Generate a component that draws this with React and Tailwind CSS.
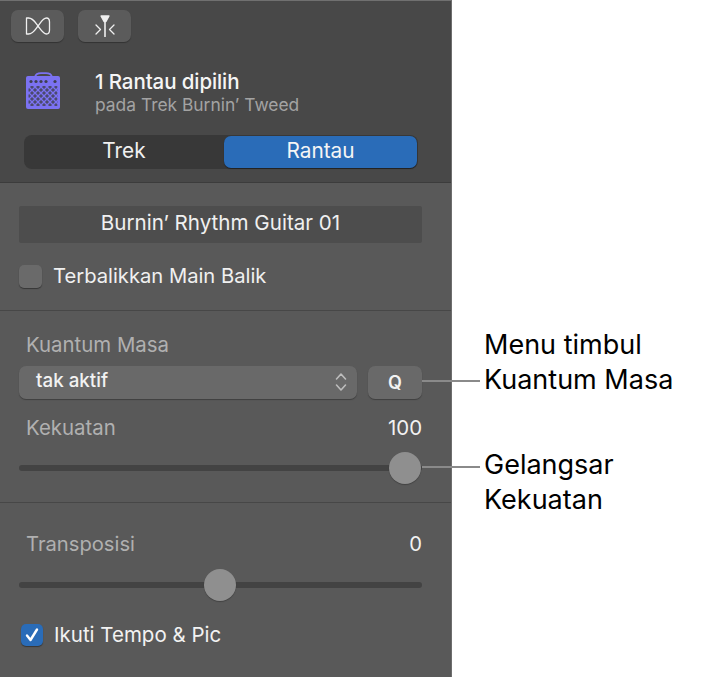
import React from "react";

const font = { fontFamily: "Inter, 'Noto Sans', sans-serif" };

function Slider({ pos }) {
  return (
    <div className="relative h-[36px] flex items-center">
      <div className="h-[6px] w-full rounded-full bg-[#434343]" />
      <div className="absolute top-[2px] w-[32px] h-[32px] rounded-full bg-[#8f8f8f] shadow-[0_1px_1px_rgba(0,0,0,0.25)]" style={{ left: pos }} />
    </div>
  );
}

export default function App() {
  return (
    <div className="relative w-[705px] h-[678px] bg-white flex font-['Inter'] overflow-hidden" style={font}>
      <div className="w-[452px] h-[677px] flex flex-col bg-[#595959] border-r border-[#6e6e6e] text-[#f2f2f2]">
        <div className="h-[183px] shrink-0 bg-[#484848] border-t border-[#707070] border-b-[1px] border-b-[#3c3c3c] pt-[9px] flex flex-col">
          <div className="flex gap-[14px] pl-[11px]">
            <button className="w-[53px] h-[32px] rounded-[7px] bg-[#5b5b5b] shadow-[0_1px_1px_rgba(0,0,0,0.3)] flex items-center justify-center">
              <svg width="26" height="20" viewBox="0 0 26 20" fill="none" stroke="#f0f0f0" strokeWidth="1.3" strokeLinecap="round" strokeLinejoin="round">
                <path d="M1.5 2 V18 H3.5 C8 18 10 14 13 10 C16 6 18 2 21.5 2 C24 2 24.5 4 24.5 6 V14 C24.5 16 24 18 21.5 18 C18 18 16 14 13 10 C10 6 8 2 3.5 2 Z" />
              </svg>
            </button>
            <button className="w-[53px] h-[32px] rounded-[7px] bg-[#5b5b5b] shadow-[0_1px_1px_rgba(0,0,0,0.3)] flex items-center justify-center">
              <svg width="22" height="22" viewBox="0 0 22 22" fill="none" stroke="#f0f0f0" strokeWidth="1.3" strokeLinecap="round" strokeLinejoin="round">
                <path d="M7 1 H15 L12 6.5 H10 Z" fill="#f0f0f0" />
                <path d="M11 6 V21.5" strokeWidth="1.6" />
                <path d="M2 10 L6.5 14.5 L2 19" />
                <path d="M20 10 L15.5 14.5 L20 19" />
              </svg>
            </button>
          </div>
          <div className="flex items-start mt-[28px] pl-[26px]">
            <svg width="35" height="37" viewBox="0 0 35 37" className="mt-[2px]">
              <defs>
                <pattern id="mesh" width="6" height="6" patternUnits="userSpaceOnUse">
                  <rect width="6" height="6" fill="#4b4a6e" />
                  <path d="M0 0 L6 6 M6 0 L0 6" stroke="#7b72f2" strokeWidth="1.3" />
                </pattern>
              </defs>
              <path d="M9 5 Q10 1.2 15 1.2 H20 Q25 1.2 26 5" fill="none" stroke="#7b72f2" strokeWidth="1.8" />
              <rect x="0" y="4" width="34" height="33" rx="2" fill="#7b72f2" />
              <rect x="2.5" y="14" width="29" height="20" fill="url(#mesh)" />
              <circle cx="5" cy="9.5" r="1.6" fill="#3f3f52" />
              <circle cx="10" cy="9.5" r="1.6" fill="#3f3f52" />
              <circle cx="15" cy="9.5" r="1.6" fill="#3f3f52" />
              <circle cx="20" cy="9.5" r="1.6" fill="#3f3f52" />
              <circle cx="29" cy="9.5" r="1.6" fill="#3f3f52" />
            </svg>
            <div className="ml-[34px]">
              <div className="text-[20.5px] leading-[24px] font-medium text-[#f5f5f5] tracking-[-0.1px]">1 Rantau dipilih</div>
              <div className="text-[17.4px] leading-[22px] text-[#a3a3a3]">pada Trek Burnin’ Tweed</div>
            </div>
          </div>
          <div className="mt-[19px] ml-[24px] w-[394px] h-[34px] rounded-[8px] bg-[#383838] flex items-center text-[20.8px]">
            <div className="w-[200px] text-center text-[#f0f0f0] -mt-[2px]">Trek</div>
            <div className="w-[193px] h-[32px] rounded-[7px] bg-[#2a6cb8] flex items-center justify-center text-[#f5f5f5] shadow-[0_1px_1px_rgba(0,0,0,0.4)]"><span className="-mt-[2px]">Rantau</span></div>
          </div>
        </div>

        <div className="h-[128px] shrink-0 pl-[19px] pr-[29px] pt-[23px] border-b border-[#474747]">
          <div className="h-[37px] w-[403px] rounded-[2px] bg-[#4d4d4d] text-[20.6px] text-center leading-[33px] text-[#f0f0f0]">Burnin’ Rhythm Guitar 01</div>
          <label className="flex items-center mt-[21px]">
            <span className="w-[23px] h-[23px] rounded-[5px] bg-[#6a6a6a] shadow-[0_1px_1px_rgba(0,0,0,0.4)]" />
            <span className="ml-[11px] text-[20.2px] leading-[24px] text-[#f0f0f0]">Terbalikkan Main Balik</span>
          </label>
        </div>

        <div className="h-[192px] shrink-0 pl-[19px] pr-[29px] pt-[22px] border-b border-[#474747]">
          <div className="pl-[7px] text-[20.4px] leading-[24px] text-[#b0b0b0]">Kuantum Masa</div>
          <div className="flex gap-[11px] mt-[9px]">
            <div className="w-[338px] h-[33px] rounded-[7px] bg-[#696969] shadow-[0_1px_1px_rgba(0,0,0,0.3)] flex items-center justify-between pl-[17px] pr-[9px] text-[18.8px] font-medium text-[#f2f2f2]">
              <span className="-mt-[3px]">tak aktif</span>
              <svg width="14" height="22" viewBox="0 0 14 22" fill="none" stroke="#bdbdbd" strokeWidth="1.6" strokeLinecap="round" strokeLinejoin="round" className="-mt-[2px]">
                <path d="M2.5 8 L7 3 L11.5 8" />
                <path d="M2.5 14 L7 19 L11.5 14" />
              </svg>
            </div>
            <div className="w-[54px] h-[33px] rounded-[7px] bg-[#696969] shadow-[0_1px_1px_rgba(0,0,0,0.3)] flex items-center justify-center text-[18px] font-semibold text-[#f2f2f2]">Q</div>
          </div>
          <div className="flex justify-between pl-[7px] mt-[17px] text-[20.4px] leading-[24px]">
            <span className="text-[#b0b0b0]">Kekuatan</span>
            <span className="text-[#f2f2f2]">100</span>
          </div>
          <div className="mt-[10px]"><Slider pos="370px" /></div>
        </div>

        <div className="flex-1 pl-[19px] pr-[29px] pt-[29px]">
          <div className="flex justify-between pl-[7px] text-[20.2px] leading-[24px]">
            <span className="text-[#b0b0b0]">Transposisi</span>
            <span className="text-[#f2f2f2]">0</span>
          </div>
          <div className="mt-[11px]"><Slider pos="185px" /></div>
          <label className="flex items-center mt-[20px] pl-[2px]">
            <span className="w-[22px] h-[22px] rounded-[5px] bg-[#2a6cb8] shadow-[0_1px_1px_rgba(0,0,0,0.4)] flex items-center justify-center">
              <svg width="16" height="16" viewBox="0 0 16 16" fill="none" stroke="#ffffff" strokeWidth="2.4" strokeLinecap="round" strokeLinejoin="round">
                <path d="M3 8.5 L6.5 13 L13 2.5" />
              </svg>
            </span>
            <span className="ml-[11px] text-[20.5px] leading-[24px] text-[#f2f2f2]">Ikuti Tempo &amp; Pic</span>
          </label>
        </div>
      </div>

      <div className="flex-1 pl-[32px] pt-[327px] text-[27px] leading-[35px] text-black">
        <div>Menu timbul<br />Kuantum Masa</div>
        <div className="mt-[50px]">Gelangsar<br />Kekuatan</div>
      </div>

      <div className="absolute left-[422px] top-[380px] w-[58px] h-[2px] bg-[#8a8a8a]" />
      <div className="absolute left-[422px] top-[466px] w-[58px] h-[2px] bg-[#8a8a8a]" />
    </div>
  );
}
